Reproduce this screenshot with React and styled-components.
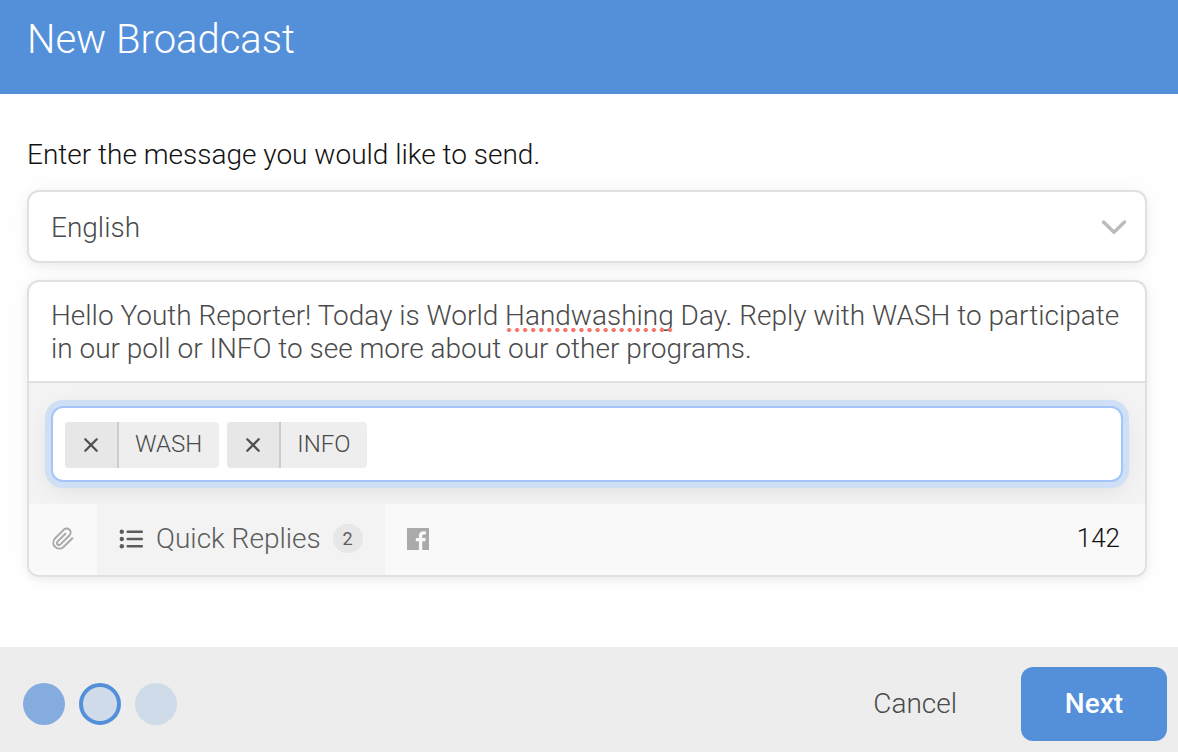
import React, { useLayoutEffect, useRef, useState } from 'react';
import styled, { createGlobalStyle, css } from 'styled-components';

const GlobalStyle = createGlobalStyle`
    * {
        box-sizing: border-box;
    }

    body {
        margin: 0;
        background-color: #fff;
        font-family: Roboto, sans-serif;
        font-weight: 300;
        font-size: 28px;
        line-height: 33px;
        color: #111;
    }

    button, input, select, textarea {
        font: inherit;
        color: inherit;
        margin: 0;
    }

    button {
        cursor: pointer;
    }
`;

const Dialog = styled.form`
    min-height: 100vh;
    display: flex;
    flex-direction: column;
`;

const Header = styled.header`
    padding: 17px 27px 31px;
    background-color: #5390d9;
    color: #fff;
`;

const Title = styled.h1`
    margin: 0;
    font-size: 40px;
    line-height: 46px;
    font-weight: 300;
`;

const Body = styled.main`
    flex-grow: 1;
    display: flex;
    flex-direction: column;
    padding: 44px 31px 70px 27px;
`;

const Label = styled.label`
    margin-bottom: 19px;
`;

const box = css`
    border: 2px solid #e0e0e0;
    border-radius: 12px;
    background-color: #fff;
    box-shadow: 0 0 30px rgba(0, 0, 0, 0.04), 0 3px 8px rgba(0, 0, 0, 0.06);
`;

const SelectBox = styled.div`
    ${box}
    display: grid;
    align-items: center;
    height: 73px;
    margin-bottom: 17px;
    color: #4a4a4a;

    > * {
        grid-area: 1 / 1;
    }

    svg {
        justify-self: end;
        margin-right: 18px;
        pointer-events: none;
    }
`;

const Select = styled.select`
    appearance: none;
    width: 100%;
    height: 100%;
    padding: 2px 60px 0 22px;
    border: 0;
    outline: 0;
    background: transparent;
`;

const Composer = styled.section`
    ${box}
    overflow: hidden;
    color: #4a4a4a;
`;

const MessageArea = styled.div`
    position: relative;
    border-bottom: 2px solid #e0e0e0;
`;

const Message = styled.textarea`
    display: block;
    width: 100%;
    padding: 17px 22px 16px;
    border: 0;
    outline: 0;
    resize: none;
    overflow: hidden;
    white-space: pre-wrap;
    background: transparent;
`;

const SpellMark = styled.span`
    position: absolute;
    height: 4px;
    background: radial-gradient(circle, #f4776b 0 1.8px, transparent 2.4px) 0 0 / 8px 4px round;
    pointer-events: none;
`;

const Replies = styled.div`
    padding: 23px 22px 22px;
    background-color: #f3f3f3;
`;

const ReplyBox = styled.div`
    display: flex;
    align-items: center;
    gap: 8px;
    height: 76px;
    padding: 2px 12px 0;
    border: 2px solid #a4c5fa;
    border-radius: 12px;
    background-color: #fff;
    box-shadow: 0 0 0 6px #cfdff5, 0 6px 24px rgba(0, 0, 0, 0.1);
`;

const Chip = styled.div`
    display: flex;
    height: 46px;
    border-radius: 4px;
    overflow: hidden;
    background-color: #eee;
    font-size: 24px;
    line-height: 44px;
`;

const ChipRemove = styled.button`
    display: flex;
    align-items: center;
    justify-content: center;
    width: 54px;
    padding: 0;
    border: 0;
    border-right: 2px solid #ccc;
    background-color: #e7e7e7;
`;

const ChipName = styled.span`
    padding: 0 17px 0 16px;
`;

const ReplyInput = styled.input`
    flex: 1;
    min-width: 0;
    border: 0;
    outline: 0;
    background: transparent;
`;

const Toolbar = styled.div`
    display: flex;
    height: 71px;
    background-color: #f9f9f9;
`;

const Tool = styled.button`
    display: flex;
    align-items: center;
    padding: 0 22px 2px;
    border: 0;
    background-color: ${({ $active }) => $active ? '#f3f3f3' : 'transparent'};
    color: ${({ $active }) => $active ? '#5c5c5c' : '#aaa'};
`;

const ToolName = styled.span`
    margin: 0 12px;
`;

const Badge = styled.span`
    width: 30px;
    border-radius: 15px;
    background-color: #e7e7e7;
    font-size: 18px;
    line-height: 29px;
    font-weight: 400;
    text-align: center;
`;

const Counter = styled.output`
    align-self: center;
    margin-left: auto;
    padding: 0 25px 2px 0;
    font-size: 26px;
    color: #111;
`;

const Footer = styled.footer`
    display: flex;
    align-items: center;
    gap: 14px;
    min-height: 105px;
    padding: 9px 11px 0 23px;
    background-color: #ededed;
`;

const Step = styled.span`
    width: 42px;
    height: 42px;
    border-radius: 50%;
    background-color: ${({ $done }) => $done ? '#84acdf' : '#d0dbe9'};
    border: ${({ $current }) => $current ? '4px solid #5390d9' : '0'};
`;

const Cancel = styled.button`
    margin-left: auto;
    margin-right: 32px;
    padding: 7px 18px 9px;
    border: 0;
    background: transparent;
    color: #4a4a4a;
`;

const Next = styled.button`
    width: 146px;
    height: 74px;
    padding: 0 0 2px;
    border: 0;
    border-radius: 12px;
    background-color: #5390d9;
    color: #fff;
    font-weight: 500;
`;

const ChevronIcon = () => (
    <svg width="26" height="16" viewBox="0 0 26 16" fill="none" stroke="#bbb" strokeWidth="3.4" strokeLinecap="round" strokeLinejoin="round" aria-hidden="true">
        <path d="M2.5 3L13 13.2 23.5 3"/>
    </svg>
);

const CrossIcon = () => (
    <svg width="16" height="16" viewBox="0 0 16 16" fill="none" stroke="#505050" strokeWidth="2.3" strokeLinecap="round" aria-hidden="true">
        <path d="M2.3 2.3l11.4 11.4M13.7 2.3L2.3 13.7"/>
    </svg>
);

const ClipIcon = () => (
    <svg width="24" height="24" viewBox="0 0 24 24" fill="none" stroke="currentColor" strokeWidth="2" strokeLinecap="round" strokeLinejoin="round" aria-hidden="true">
        <path d="M21.4 11.2l-9.2 9a6 6 0 0 1-8.5-8.4l9.2-9.2a4 4 0 0 1 5.7 5.6l-9.2 9.2a2 2 0 0 1-2.9-2.8l7.9-7.9"/>
    </svg>
);

const ListIcon = () => (
    <svg width="25" height="20" viewBox="0 0 25 20" fill="currentColor" aria-hidden="true">
        <circle cx="2.8" cy="2.7" r="2.2"/>
        <circle cx="2.8" cy="10" r="2.2"/>
        <circle cx="2.8" cy="17.3" r="2.2"/>
        <rect x="7.5" y="1.5" width="16.5" height="2.4" rx="1"/>
        <rect x="7.5" y="8.8" width="16.5" height="2.4" rx="1"/>
        <rect x="7.5" y="16.1" width="16.5" height="2.4" rx="1"/>
    </svg>
);

const FacebookIcon = () => (
    <svg width="22" height="22" viewBox="0 0 22 22" fill="currentColor" aria-hidden="true">
        <path d="M0 0h22v22h-6.7v-8.7h3l.5-3.2h-3.5V8.2c0-1.1.5-1.7 1.8-1.7h1.8V3.4c-.5-.1-1.4-.2-2.4-.2-2.9 0-4.6 1.6-4.6 4.5v2.4H8.8v3.2h3.1V22H0z"/>
    </svg>
);

const flagged = 'Handwashing';

const initialMessage = 'Hello Youth Reporter! Today is World Handwashing Day. Reply with WASH to participate in our poll or INFO to see more about our other programs.';

// A textarea has no ranges to measure, so lay the text out in a throwaway copy.
const measureWord = (field, word) => {
    const start = field.value.indexOf(word);
    if (start < 0) return null;

    const copy = document.createElement('div');
    copy.className = field.className;
    copy.style.cssText = `position: absolute; visibility: hidden; width: ${field.offsetWidth}px`;
    copy.textContent = field.value;
    field.parentNode.appendChild(copy);

    const range = document.createRange();
    range.setStart(copy.firstChild, start);
    range.setEnd(copy.firstChild, start + word.length);
    const from = copy.getBoundingClientRect();
    const rect = range.getBoundingClientRect();
    copy.remove();

    return {
        left: rect.left - from.left,
        top: rect.bottom - from.top - 4,
        width: rect.width,
    };
};

const MessageField = ({ value, onChange }) => {
    const field = useRef(null);
    const [mark, setMark] = useState(null);

    useLayoutEffect(() => {
        const update = () => setMark(measureWord(field.current, flagged));
        update();
        window.addEventListener('resize', update);
        return () => window.removeEventListener('resize', update);
    }, [value]);

    return (
        <MessageArea>
            <Message
                id="message"
                ref={field}
                rows="2"
                spellCheck="false"
                value={value}
                onChange={e => onChange(e.target.value)}/>
            {mark && <SpellMark style={mark}/>}
        </MessageArea>
    );
};

export default function App() {
    const [message, setMessage] = useState(initialMessage);
    const [replies, setReplies] = useState(['WASH', 'INFO']);
    const [draft, setDraft] = useState('');

    const removeReply = name => setReplies(replies.filter(reply => reply !== name));

    const addReply = e => {
        if (e.key !== 'Enter') return;
        e.preventDefault();
        const name = draft.trim();
        if (name && !replies.includes(name)) {
            setReplies([...replies, name]);
        }
        setDraft('');
    };

    return (
        <>
            <GlobalStyle/>
            <Dialog onSubmit={e => e.preventDefault()}>
                <Header>
                    <Title>New Broadcast</Title>
                </Header>
                <Body>
                    <Label htmlFor="message">Enter the message you would like to send.</Label>
                    <SelectBox>
                        <Select aria-label="Language" defaultValue="English">
                            <option>English</option>
                        </Select>
                        <ChevronIcon/>
                    </SelectBox>
                    <Composer>
                        <MessageField value={message} onChange={setMessage}/>
                        <Replies>
                            <ReplyBox>
                                {replies.map(reply => (
                                    <Chip key={reply}>
                                        <ChipRemove type="button" aria-label={`Remove ${reply}`} onClick={() => removeReply(reply)}>
                                            <CrossIcon/>
                                        </ChipRemove>
                                        <ChipName>{reply}</ChipName>
                                    </Chip>
                                ))}
                                <ReplyInput
                                    aria-label="Add quick reply"
                                    value={draft}
                                    onChange={e => setDraft(e.target.value)}
                                    onKeyDown={addReply}/>
                            </ReplyBox>
                        </Replies>
                        <Toolbar>
                            <Tool type="button" aria-label="Attachments">
                                <ClipIcon/>
                            </Tool>
                            <Tool type="button" $active>
                                <ListIcon/>
                                <ToolName>Quick Replies</ToolName>
                                <Badge>{replies.length}</Badge>
                            </Tool>
                            <Tool type="button" aria-label="Facebook">
                                <FacebookIcon/>
                            </Tool>
                            <Counter htmlFor="message">{message.length}</Counter>
                        </Toolbar>
                    </Composer>
                </Body>
                <Footer>
                    <Step $done/>
                    <Step $current/>
                    <Step/>
                    <Cancel type="button">Cancel</Cancel>
                    <Next type="submit">Next</Next>
                </Footer>
            </Dialog>
        </>
    );
}
